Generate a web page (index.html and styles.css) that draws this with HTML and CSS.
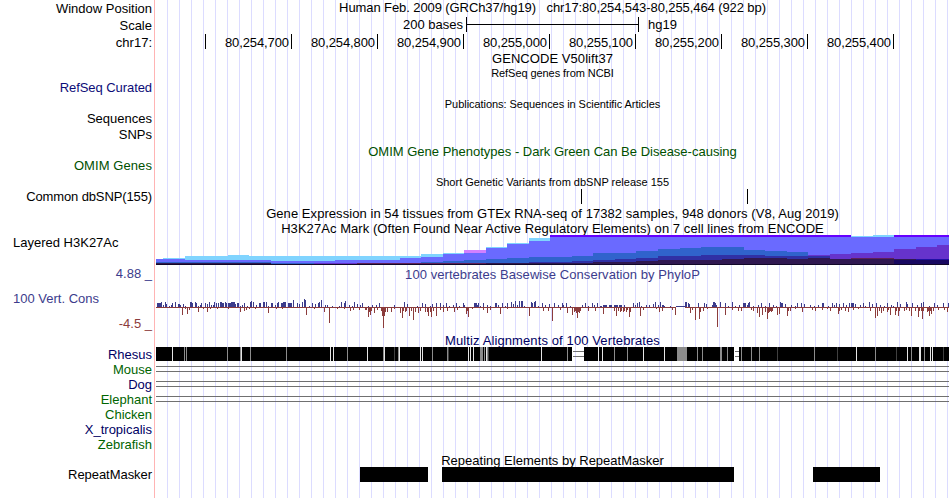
FILE: index.html
```html
<!DOCTYPE html>
<html lang="en">
<head>
  <meta charset="UTF-8">
  <title>chr17:80,254,543-80,255,464</title>
  <link rel="stylesheet" href="styles.css">
</head>
<body>
  <div class="browser">
    <div class="labels">
      <div class="label first">Window Position</div>
      <div class="label ruler-label">Scale</div>
      <div class="label ruler-label">chr17:</div>
      <div class="label refseq navy">RefSeq Curated</div>
      <div class="label spaced">Sequences</div>
      <div class="label close">SNPs</div>
      <div class="label spaced green"><span class="t-omim-label">OMIM Genes</span></div>
      <div class="label spaced"><span class="t-dbsnp">Common dbSNP(155)</span></div>
      <div class="label layered left">Layered H3K27Ac</div>
      <div class="label spaced blue">4.88 _</div>
      <div class="label cons left blue">100 Vert. Cons</div>
      <div class="label cons red">-4.5 _</div>
      <div class="label spaced species-a">Rhesus</div>
      <div class="label species-b">Mouse</div>
      <div class="label species-a">Dog</div>
      <div class="label species-b">Elephant</div>
      <div class="label species-b">Chicken</div>
      <div class="label species-a">X_tropicalis</div>
      <div class="label species-b">Zebrafish</div>
      <div class="label repeat-label">RepeatMasker</div>
    </div>

    <div class="tracks">
      <div class="title"><span class="t-pos">Human Feb. 2009 (GRCh37/hg19) &nbsp; chr17:80,254,543-80,255,464 (922 bp)</span></div>

      <div class="scale">
        <span class="scale-name">200 bases</span>
        <span class="scale-bar"></span>
        <span class="scale-db">hg19</span>
      </div>

      <div class="ruler">
        <span class="tick first-tick"></span>
        <span class="tick">80,254,700</span>
        <span class="tick">80,254,800</span>
        <span class="tick">80,254,900</span>
        <span class="tick">80,255,000</span>
        <span class="tick">80,255,100</span>
        <span class="tick">80,255,200</span>
        <span class="tick">80,255,300</span>
        <span class="tick">80,255,400</span>
      </div>

      <div class="title gencode"><span class="t-gencode">GENCODE V50lift37</span></div>
      <div class="title small"><span class="t-refseq">RefSeq genes from NCBI</span></div>
      <div class="title small pubs"><span class="t-pubs">Publications: Sequences in Scientific Articles</span></div>
      <div class="title omim green">OMIM Gene Phenotypes - Dark Green Can Be Disease-causing</div>
      <div class="title small snp">Short Genetic Variants from dbSNP release 155</div>
      <svg class="chart" width="795" height="15" viewBox="155 189 795 15">
        <path d="M581 189h1v15h-1zM747 189h1v15h-1z"/>
      </svg>
      <div class="title gtex"><span class="t-wide">Gene Expression in 54 tissues from GTEx RNA-seq of 17382 samples, 948 donors (V8, Aug 2019)</span></div>
      <div class="title short"><span class="t-wide">H3K27Ac Mark (Often Found Near Active Regulatory Elements) on 7 cell lines from ENCODE</span></div>

      <!-- layered signal, back to front -->
      <svg class="chart" width="795" height="30" viewBox="155 235 795 30">
        <path fill="#80d4ff" d="M163 264V258H185V256H228V255H249V256H421V254H443V253H486V247H507V243H529V238H550V236H873V235H894V264z"/>
        <path fill="#d280ff" d="M464 250h22v4h-22z"/>
        <path fill="#6a6aff" d="M156 264V259H185V260H271V261H335V260H400V258H421V257H443V254H464V253H486V248H507V244H529V241H550V237H949V264z"/>
        <path fill="#6600ff" d="M550 235h301v2h-301zM894 235h55v2h-55z"/>
        <path fill="#3063cc" d="M156 264V262H271V263H421V262H443V261H464V260H486V259H507V258H529V257H572V256H593V253H636V251H658V249H680V248H701V247H744V250H765V251H787V252H808V264z"/>
        <path fill="#6633cc" d="M314 263h86v1h-86zM808 264V255H830V254H851V253H873V252H894V249H916V247H937V245H949V264z"/>
        <path fill="#3030a5" d="M486 264V263H529V262H572V261H593V260H615V259H636V258H658V256H701V255H765V256H830V264z"/>
        <path fill="#301850" d="M156 264V263H271V264zM421 264V263H593V262H636V261H658V260H701V260H722V259H744V258H787V259H808V258H830V259H851V258H873V259H949V264z"/>
        <path fill="#602058" d="M357 263h129v1h-129zM851 258h43v1h-43z"/>
        <path fill="#180860" d="M894 260h55v4h-55z"/>
        <path fill="#2010a5" d="M916 259h33v1h-33z"/>
        <path fill="#120828" d="M156 264h793v1h-793z"/>
      </svg>

      <div class="title phylop blue"><span class="t-wide">100 vertebrates Basewise Conservation by PhyloP</span></div>
      <svg class="chart" width="795" height="51" viewBox="155 282 795 51">
        <path fill="#8c3c3c" d="M156 307h520v1h-520zM685 307h264v1h-264z"/>
        <path id="wiggleDown" fill="#8c3c3c"/>
        <path id="wiggleUp" fill="#3c3c8c"/>
      </svg>

      <div class="title short navy2"><span class="t-multiz">Multiz Alignments of 100 Vertebrates</span></div>
      <svg class="chart" width="795" height="60" viewBox="155 347 795 60">
        <path d="M156 347h416v14h-416zM584 347h150v14h-150zM739 347h210v14h-210z"/>
        <path id="alignDark" fill="#404040"/>
        <path id="alignGray" fill="#8c8c8c"/>
        <path id="alignLight" fill="#e6e6e6"/>
        <path fill="#707070" d="M573 351h11v1h-11zM573 356h11v1h-11zM735 351h4v1h-4zM735 356h4v1h-4z"/>
        <path fill="#707070" d="M156 366h793v1h-793zM156 371h793v1h-793zM156 381h793v1h-793zM156 386h793v1h-793zM156 396h793v1h-793zM156 401h793v1h-793z"/>
      </svg>

      <div class="title short repeats">Repeating Elements by RepeatMasker</div>
      <svg class="chart" width="795" height="15" viewBox="155 467 795 15">
        <path d="M360 467h68v15h-68zM442 467h292v15h-292zM813 467h67v15h-67z"/>
      </svg>
    </div>
  </div>

  <script>
    // position:height, or position+width:height
    const down = "182:8 185:2 187:7 189:3 198:5 203:2 207:5 210:2 217:2 228:2 240:5 244:4 246:3 249:2 255:2 268:6 276:2 282:2 306:8 314:2 324:5 329:16 337:2 344:2 350:4 353:3 359:3 365:3 366:3 368:10 369:5 370:8 371:4 374:6 377:3 381:4 382:9 383:21 384:9 385:5 387:5 391:5 394:2 400:6 402:11 403:4 405:5 406:4 409:9 411:4 413:13 415:5 418:6 420:4 425:5 427:5 428:9 430:5 431:10 433:4 436:9 440:3 443:5 447:4 454:5 457:3 466:7 467:4 468:10 472:2 483:3 487:6 490:3 500:7 507:2 529:9 543:4 548:4 552:14 560:3 567:6 572:8 574:5 575:4 576:6 577:11 578:5 579:6 580:4 588:4 595:4 603:7 614:4 616:9 618:4 620:5 621:4 623:5 624:4 626:5 627:3 629:10 630:5 640:9 643:3 656:2 659:5 662:4 672:3 675:8 690:6 692:3 695:13 699:12 700:5 703:4 707:2 717:20 725:8 732:3 738:4 741:4 751:3 753:4 757:6 759:10 762:8 765:5 767:12 768:6 769:5 770:4 771:5 772:4 777:8 779:7 787:9 788:4 790:4 795:2 802:5 812:3 815:4 822:3 827:2 830:4 838:7 839:4 841:3 845:4 848:5 853:3 858:2 870:4 875:11 877:9 879:4 881:6 883:4 887:5 888:3 890:8 895:8 896:4 898:9 899:4 904:4 906:3 909:4 911:9 915:4 918:10 919:4 921:4 922:12 923:4 927:5 928:4 929:9 930:4 931:7 933:4 938:3 944:3 947:5";

    const up = "157+4:4 161:5 163:2 165:5 166:3 169:1 171:2 172:4 175:5 178+2:3 180:2 183:3 185:1 190+2:5 192:4 195:5 196:4 198:1 200:2 201:4 205:4 207:3 209:5 211:2 213:2 214:5 216:4 218:4 220+2:5 222+2:4 225:5 226:4 228+3:4 231+4:5 235:3 237+2:4 240:1 242:2 244:4 247:1 250:5 251:6 253:5 256:2 259+2:4 263+2:5 266:5 268:1 271+2:4 275:2 277:4 278:5 281+2:4 283+3:5 288+4:4 293:7 297:4 299:3 302:5 304:8 305:7 309:1 312:4 315:3 318:4 319:5 321:7 325:2 327:2 332:1 339:1 341:5 344:4 345:6 349:2 352:1 354:5 357:3 360:2 362:4 368:1 372:2 376:2 379:4 394:2 404:5 407:3 417:1 422:4 425:3 430:1 432:3 436:4 440:4 443:2 446:4 449:1 453:2 456:4 459:1 463:4 464:2 474+3:4 477:2 478:4 480:1 483:4 487:2 490:1 495+2:4 498:2 502:4 505:1 507:4 511:5 513:3 515:6 517:2 519:6 521+2:6 524:1 531:5 532:4 534:5 535:6 538:1 542:4 545:2 549:3 554:4 558:2 562:4 563:2 566:4 570:1 582:2 585:4 588:1 592:4 594:2 597:4 600+2:1 603+4:2 609+3:2 614+4:2 619+3:2 624:2 633:4 635:2 637:4 639:5 641:1 646:2 649:2 653:3 655:5 658:2 660:5 662+2:2 664:1 670:1 676+9:1 685+2:5 688:4 689:3 698:4 704:4 706:3 712:2 713+2:5 715:4 716:2 720:5 725:4 728:1 732:5 735:1 739:2 743+3:4 747:2 748:4 749:5 753:1 758:2 761:4 765:1 769:4 773:2 776:1 780:5 781+2:4 785:3 791:2 795:1 797:4 801:4 804:3 810:2 814:1 818:2 822+2:4 828:1 832:4 834:2 836:4 839:3 843:4 846:2 849:4 851+3:4 855:3 860:2 863:4 865:1 869:5 872:3 876:4 880:2 884:1 887:4 891:2 893:1 897:5 900:3 906:5 907:3 912:4 917:2 921:4 923:5 929:1 934:4 937:2 943:4 948:4";

    function drawBars(id, data, fromLine) {
      let d = "";
      data.split(" ").forEach(item => {
        const [place, height] = item.split(":");
        const [x, width] = place.split("+");
        const w = width || 1;
        const y = fromLine === "up" ? 307 - height : 307;
        d += "M" + x + " " + y + "h" + w + "v" + height + "h-" + w + "z";
      });
      document.getElementById(id).setAttribute("d", d);
    }

    function drawStripes(id, data) {
      let d = "";
      data.split(" ").forEach(item => {
        const [x, width] = item.split("+");
        const w = width || 1;
        d += "M" + x + " 347h" + w + "v14h-" + w + "z";
      });
      document.getElementById(id).setAttribute("d", d);
    }

    drawBars("wiggleDown", down, "down");
    drawBars("wiggleUp", up, "up");
    drawStripes("alignDark", "394 448 488 777 837 896 943");
    drawStripes("alignGray", "184 186 227 240 250 286 347 383 398 432 447 480+2 482 484 487 567 614 627 677+10 697 702 720+2 727 741 751 759 814 875 911 924");
    drawStripes("alignLight", "172 241 330 333 367 384 399 420 422 468 470 473 486 541 598 602 643 664 856 907 919+2 930 932");
  </script>
</body>
</html>
```
FILE: styles.css
```css
body {
  margin: 0;
  background: #fff;
  color: #000;
  font-family: "Liberation Sans", Arial, Helvetica, sans-serif;
  font-size: 13px;
  line-height: 15px;
}

.browser {
  display: grid;
  grid-template-columns: 154px 796px;
  height: 498px;
  overflow: hidden;
  white-space: nowrap;
}

.labels {
  display: flex;
  flex-direction: column;
  text-align: right;
  padding-right: 2px;
}

.label {
  height: 15px;
}

.first {
  margin-top: 1px;
}

.ruler-label {
  margin-top: 2px;
}

.refseq {
  margin-top: 30px;
  letter-spacing: -0.07px;
}

.spaced {
  margin-top: 16px;
}

.close {
  margin-top: 1px;
}

.layered {
  margin-top: 31px;
}

.cons {
  margin-top: 10px;
}

.repeat-label {
  margin-top: 15px;
  letter-spacing: -0.05px;
}

.left {
  text-align: left;
  padding-left: 13px;
}

.tracks {
  box-sizing: border-box;
  border-left: 1px solid #ffb4b4;
  background: repeating-linear-gradient(to right, #dcdcff 0, #dcdcff 1px, transparent 1px, transparent 12px) 12px 0 no-repeat;
}

.title {
  height: 15px;
  text-align: center;
}

.small {
  font-size: 11px;
}

.short {
  height: 14px;
}

.t-pos {
  letter-spacing: -0.09px;
}

.t-gencode {
  letter-spacing: 0.06px;
}

.t-refseq {
  letter-spacing: -0.07px;
}

.t-pubs {
  letter-spacing: -0.05px;
}

.t-wide {
  letter-spacing: 0.06px;
}

.t-multiz {
  letter-spacing: 0.11px;
}

.t-omim-label {
  letter-spacing: 0.08px;
}

.t-dbsnp {
  letter-spacing: -0.12px;
}

.chart {
  display: block;
  shape-rendering: crispEdges;
}

.scale {
  display: flex;
  height: 15px;
  margin-top: 2px;
}

.scale-name {
  width: 308px;
  margin-right: 3px;
  text-align: right;
}

.scale-bar {
  box-sizing: border-box;
  width: 173px;
  height: 15px;
  border-left: 1px solid #000;
  border-right: 1px solid #000;
  background: linear-gradient(#000, #000) 0 7px / 100% 1px no-repeat;
}

.scale-db {
  margin-left: 9px;
}

.ruler {
  display: flex;
  height: 15px;
  margin-top: 2px;
}

.tick {
  box-sizing: border-box;
  width: 86px;
  height: 15px;
  padding-right: 2px;
  padding-top: 1px;
  border-right: 1px solid #000;
  text-align: right;
  letter-spacing: -0.1px;
}

.first-tick {
  width: 51px;
}

.gencode,
.gtex,
.phylop {
  margin-top: 2px;
}

.pubs {
  margin-top: 16px;
}

.omim {
  margin-top: 32px;
}

.snp {
  height: 14px;
  margin-top: 16px;
}

.repeats {
  margin-top: 46px;
}

.navy {
  color: #0c0c78;
}

.navy2,
.species-a {
  color: #000064;
}

.green {
  color: #005000;
}

.species-b {
  color: #006400;
}

.blue {
  color: #3c3c8c;
}

.red {
  color: #8c3c3c;
}
```
